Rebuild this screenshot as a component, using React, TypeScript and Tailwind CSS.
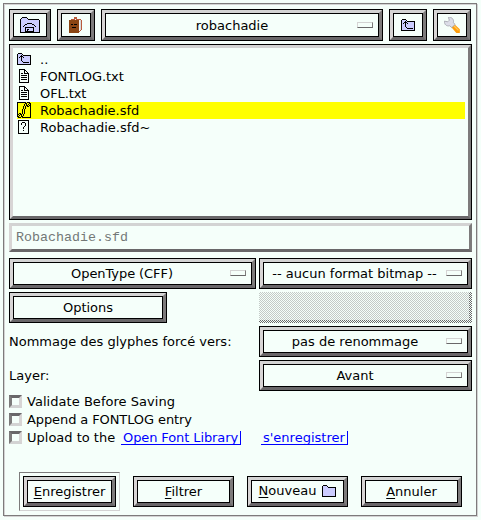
import React from "react";

const PALETTE: Record<string, string> = {
  "#": "#000000",
  o: "#ccccff",
  w: "#f5f5f5",
  b: "#8b4513",
  r: "#b85a3c",
  g: "#d8d8d8",
};

function PixelIcon({ rows }: { rows: string[] }) {
  const width = rows[0].length;
  return (
    <svg width={width} height={rows.length} viewBox={`0 0 ${width} ${rows.length}`} shapeRendering="crispEdges" className="block shrink-0">
      {rows.flatMap((row, y) =>
        [...row].map((c, x) => (PALETTE[c] ? <rect key={`${x}-${y}`} x={x} y={y} width="1" height="1" fill={PALETTE[c]} /> : null)),
      )}
    </svg>
  );
}

const HOME = [
  "..#####.............",
  ".#ooooo#............",
  "#ooooooo###########.",
  "#oooooooooooooooooo#",
  "#oooooooooooooooooo#",
  "#oooooooooooooooooo#",
  "#oooooo#####ooooooo#",
  "#oooo##ooooo##ooooo#",
  "#ooo#ooooooooo#oooo#",
  "#oo#ooooooooooo#ooo#",
  "#oooo#########ooooo#",
  "#oooo#ooooooo#ooooo#",
  "#oooo#o##oooo#ooooo#",
  "#oooo#o#ooooo#ooooo#",
  "#oooo#########ooooo#",
  "####################",
];

const BOOKMARK = [
  ".....rrr......",
  ".....rrr......",
  "..rrrrwrrrrr..",
  "bbbbbbbbbbwgr.",
  "bbbbbbbbbbwgr.",
  "bbbbbbbbbbwgr.",
  "bbbbbbbbbbwgr.",
  "bb##b###bbwgr.",
  "bbbbbbbbbbwgr.",
  "bbbbbbbbbbwgr.",
  "bbb####bbbwgr.",
  "bbbbbbbbbbwgr.",
  "bbbbbbbbbbwgr.",
  "bbbbbbbbbbwr..",
  "bbbbbbbbbbr...",
  "bbbbbbbbbb....",
];

const UP = [
  ".####.........",
  "#oooo#........",
  "#ooo#o########",
  "#oo###ooooooo#",
  "#o#o#o#oooooo#",
  "#ooo#oooooooo#",
  "#ooo#oooooooo#",
  "#ooo#oooooooo#",
  "#oooo#ooooooo#",
  "#ooooo######o#",
  "#oooooooooooo#",
  "##############",
];

const FOLDER = [
  ".####.........",
  "#oooo#........",
  "#ooooo########",
  "#oooooooooooo#",
  "#oooooooooooo#",
  "#oooooooooooo#",
  "#oooooooooooo#",
  "#oooooooooooo#",
  "#oooooooooooo#",
  "#oooooooooooo#",
  "#oooooooooooo#",
  "##############",
];

const DOC = [
  "######....",
  "#....##...",
  "#....#.#..",
  "#....#..#.",
  "#.##.#####",
  "#........#",
  "#.######.#",
  "#........#",
  "#.######.#",
  "#........#",
  "#.######.#",
  "#........#",
  "#........#",
  "##########",
];

const FONT = [
  "#########.###.",
  "#.......##..##",
  "#......#.#.#.#",
  "#......#.##.##",
  "#.....#.#.##.#",
  "#.....#.#....#",
  "#.....#.#....#",
  "#....#.#.....#",
  "#....#.#.....#",
  "#....#.#.....#",
  "#....#.#.....#",
  "#.##.#.#.....#",
  "##.##.#......#",
  "#.#.#.#......#",
  "##..##.......#",
  ".###.#########",
];

const UNKNOWN = [
  "###########.",
  "#.........#.",
  "#...###...#.",
  "#..#...#..#.",
  "#..#...#..#.",
  "#......#..#.",
  "#.....#...#.",
  "#....#....#.",
  "#....#....#.",
  "#.........#.",
  "#....#....#.",
  "#.........#.",
  "#.........#.",
  "###########.",
];

function Wrench() {
  return (
    <svg width="16" height="16" viewBox="0 0 16 16" className="block">
      <path d="M7.200 10 10.200 7 15.800 12.200V15.900H12.300Z" fill="#ff9d0a" />
      <path d="M9.800 8.800 14.500 13.400" stroke="#ffc65c" strokeWidth="1.300" />
      <path d="M4.400.4 5.300 3.200 3.700 4.800.4 4.100C.2 7.600 2.600 9.500 5.700 8.800L7.800 10.600 11.100 7.500 9.400 5.500C10.100 2.300 7.600-.4 4.400.4Z" fill="#dcdde8" stroke="#9fa1ab" strokeWidth=".8" />
    </svg>
  );
}

const BEVEL = "border-3 border-t-[#d3d3d3] border-l-[#d8d5d5] border-r-[#7d7b7b] border-b-[#696769]";

function Button({ className = "", children }: { className?: string; children: React.ReactNode }) {
  return (
    <button className={`flex border border-black ${className}`}>
      <span className={`flex flex-1 self-stretch ${BEVEL}`}>
        <span className="flex flex-1 items-center justify-center border border-black whitespace-nowrap">{children}</span>
      </span>
    </button>
  );
}

function Menu({ className, label, labelClass = "" }: { className: string; label: string; labelClass?: string }) {
  return (
    <Button className={className}>
      <span className={`flex-1 text-center ${labelClass}`}>{label}</span>
      <span className="mr-[5px] mb-px h-1.5 w-4 border border-t-[#d3d3d3] border-r-[#7d7b7b] border-b-[#696769] border-l-[#d8d5d5]" />
    </Button>
  );
}

function FileRow({ icon, name, nameClass = "", selected = false }: { icon: string[]; name: string; nameClass?: string; selected?: boolean }) {
  return (
    <li className={`flex h-[17px] ${selected ? "bg-[#ffff00]" : ""}`}>
      <span className="flex h-4 w-[14px] items-center justify-center">
        <PixelIcon rows={icon} />
      </span>
      <span className={`ml-[9px] ${nameClass}`}>{name}</span>
    </li>
  );
}

function Check({ children }: { children: React.ReactNode }) {
  return (
    <div className="flex h-[18px] items-center gap-[5px] whitespace-nowrap">
      <span className="size-[13px] border-3 border-t-[#696769] border-r-[#d8d5d5] border-b-[#d3d3d3] border-l-[#7d7b7b]" />
      {children}
    </div>
  );
}

function Mnemonic({ text, className = "" }: { text: string; className?: string }) {
  return (
    <span className={className}>
      <span className="underline decoration-1 underline-offset-2">{text[0]}</span>
      {text.slice(1)}
    </span>
  );
}

export default function App() {
  return (
    <div className="h-[520px] w-[481px] overflow-hidden bg-[#f5fffa] p-[3px] font-['DejaVu_Sans',sans-serif] text-[13px] leading-[17px] text-black">
      <div className="h-[513px] w-[474px] border border-[#7d7b7b] p-[5px] shadow-[1px_1px_0_0_#d3d3d3,inset_1px_1px_0_0_#d3d3d3]">
        <header className="flex h-8 gap-1.5">
          <Button className="w-[42px]"><PixelIcon rows={HOME} /></Button>
          <Button className="w-[38px]"><PixelIcon rows={BOOKMARK} /></Button>
          <Menu className="w-[283px]" label="robachadie" labelClass="pl-px" />
          <Button className="w-[38px]"><PixelIcon rows={UP} /></Button>
          <Button className="w-[38px]"><Wrench /></Button>
        </header>

        <div className="mt-[3px] flex h-44 w-[463px] border border-black">
          <ul className={`flex-1 pt-[3px] pr-[3px] pl-1 ${BEVEL}`}>
            <FileRow icon={UP} name=".." />
            <FileRow icon={DOC} name="FONTLOG.txt" nameClass="tracking-[-0.07px]" />
            <FileRow icon={DOC} name="OFL.txt" nameClass="tracking-[-0.1px]" />
            <FileRow icon={FONT} name="Robachadie.sfd" nameClass="tracking-[-0.03px]" selected />
            <FileRow icon={UNKNOWN} name="Robachadie.sfd~" />
          </ul>
        </div>

        <div className={`mt-[3px] flex h-[29px] w-[463px] items-center pl-1 font-['Liberation_Mono',monospace] text-[13.33px] text-[#737876] ${BEVEL}`}>
          Robachadie.sfd
        </div>

        <section className="mt-1.5 grid w-[463px] grid-cols-[247px_213px] gap-[3px]">
          <Menu className="h-[31px]" label="OpenType (CFF)" labelClass="tracking-[-0.08px]" />
          <Menu className="h-[31px]" label="-- aucun format bitmap --" labelClass="pr-px" />
          <Button className="h-[31px] w-[158px]">Options</Button>
          <div className="h-[31px] bg-[repeating-conic-gradient(#696769_0_25%,#f5fffa_0_50%)] bg-size-[2px_2px] pr-[3px] pb-[3px]">
            <div className="h-full bg-[repeating-conic-gradient(#c4cac7_0_25%,#f5fffa_0_50%)] bg-size-[2px_2px]" />
          </div>
          <div className="flex h-[31px] items-center whitespace-nowrap">Nommage des glyphes forcé vers:</div>
          <Menu className="h-[31px]" label="pas de renommage" />
          <div className="flex h-[31px] items-center">Layer:</div>
          <Menu className="h-[31px]" label="Avant" />
        </section>

        <section className="mt-px">
          <Check><span className="tracking-[0.04px]">Validate Before Saving</span></Check>
          <Check><span className="tracking-[-0.1px]">Append a FONTLOG entry</span></Check>
          <Check>
            <span className="w-[89px]">Upload to the</span>
            <a className="mt-[2px] h-[14px] w-[120px] border-r border-b border-[#0000ff] pl-[2px] leading-[13px] tracking-[-0.1px] text-[#0000ff]">Open Font Library</a>
            <a className="mt-[2px] ml-[15px] h-[14px] w-[87px] border-r border-b border-[#0000ff] pl-[2px] leading-[13px] text-[#0000ff]">s'enregistrer</a>
          </Check>
        </section>

        <footer className="mt-[26px] ml-[10px] flex items-center gap-[13px]">
          <div className="h-[39px] w-[101px] border border-t-[#7d7b7b] border-r-[#d3d3d3] border-b-[#d3d3d3] border-l-[#7d7b7b] p-[3px]">
            <Button className="h-[31px] w-[93px]"><Mnemonic text="Enregistrer" /></Button>
          </div>
          <Button className="h-[31px] w-[101px]"><Mnemonic text="Filtrer" /></Button>
          <Button className="h-[31px] w-[101px]">
            <Mnemonic text="Nouveau" className="pb-[2px]" />
            <span className="mb-px ml-1.5"><PixelIcon rows={FOLDER} /></span>
          </Button>
          <Button className="h-[31px] w-[101px]"><Mnemonic text="Annuler" /></Button>
        </footer>
      </div>
    </div>
  );
}
